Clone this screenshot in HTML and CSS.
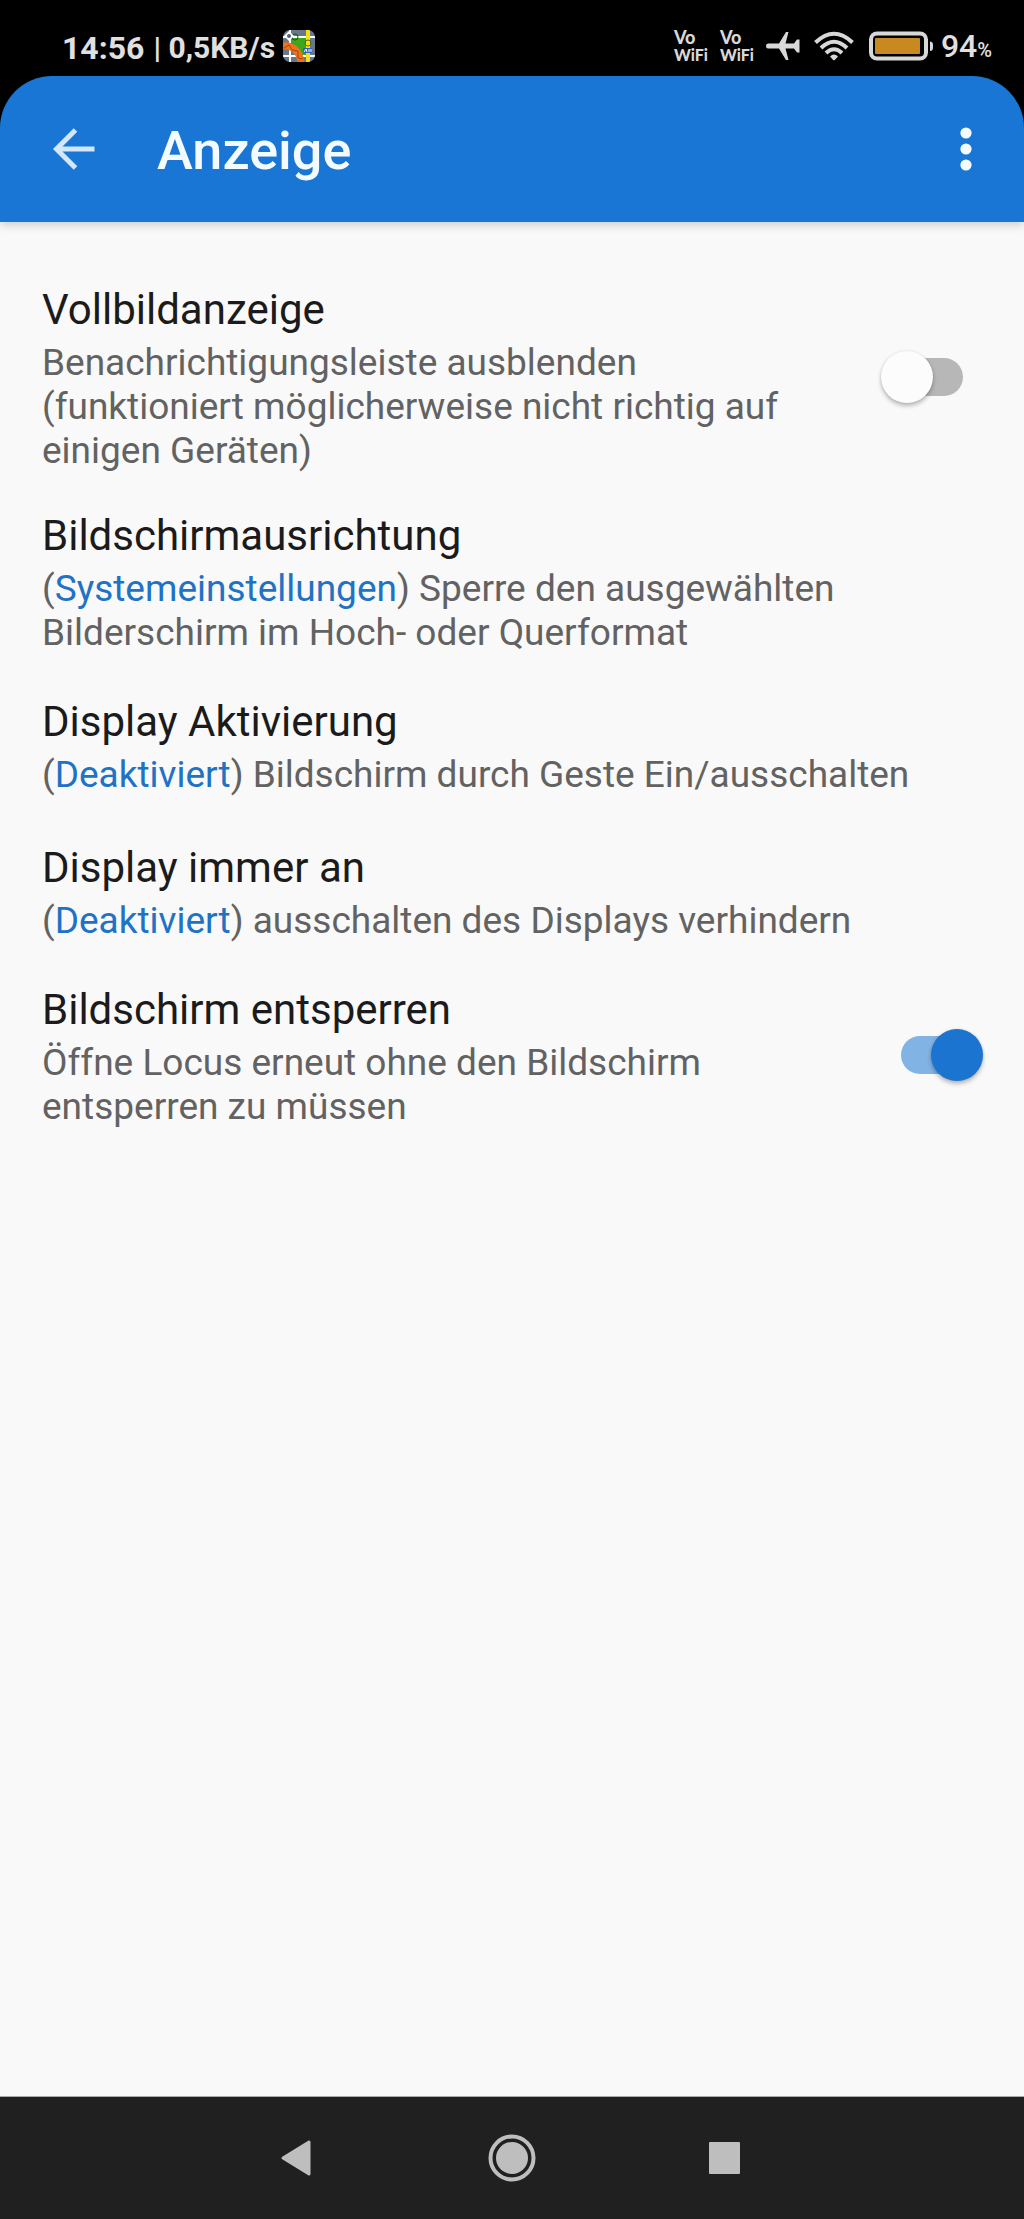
FILE: index.html
```html
<!DOCTYPE html>
<html lang="de">
<head>
<meta charset="utf-8">
<meta name="viewport" content="width=device-width, initial-scale=1">
<title>Anzeige</title>
<link rel="stylesheet" href="styles.css">
</head>
<body>
<div class="screen">
  <div class="status-bar">
    <div class="status-left">
      <span class="clock">14:56</span>
      <span class="speed">| 0,5KB/s</span>
      <svg class="map-icon" viewBox="0 0 32 32" aria-hidden="true">
        <defs><clipPath id="tile"><rect width="32" height="32" rx="7"/></clipPath></defs>
        <g clip-path="url(#tile)">
          <rect width="32" height="32" fill="#66788a"/>
          <path d="M7 7H24V25H18L7 12Z" fill="#3fa51c"/>
          <path d="M0 7H32M7 0V32M0 26H32" stroke="#fff" stroke-width="2" fill="none"/>
          <path d="M25 0V32" stroke="#f6e013" stroke-width="4"/>
          <path d="M0 16C8 15 17 20 18 33" stroke="#f0701c" stroke-width="7" fill="none"/>
          <path d="M1 18L6 15L9 20L15 21L15 28L20 29" stroke="#a3480e" fill="none"/>
          <circle cx="12" cy="7" r="3" fill="none" stroke="#234c1c"/>
          <circle cx="25" cy="13" r="3" fill="none" stroke="#59651c"/>
          <path d="M6 1L11 6L6 11L1 6Z" fill="#fff"/>
          <circle cx="6" cy="6" r="2" fill="#4f6070"/>
          <rect x="20" y="18" width="9" height="5" fill="#2b62c4"/>
          <path d="M21 22L23 19L24 22M26 19V22M28 19V22" stroke="#fff" fill="none"/>
        </g>
      </svg>
    </div>
    <div class="status-right">
      <span class="vowifi"><span class="vowifi-top">Vo</span><span>WiFi</span></span>
      <span class="vowifi"><span class="vowifi-top">Vo</span><span>WiFi</span></span>
      <svg class="plane-icon" viewBox="0 0 34 30" aria-hidden="true">
        <path d="M2 12.500H13L20 1H22.500L19.500 12.500H28L31 8.500H33.500V21.500H31L28 17.500H19.500L22.500 29H20L13 17.500H2Q0 17.500 0 15T2 12.500Z" fill="#d8d8d8"/>
      </svg>
      <svg class="wifi-icon" viewBox="0 0 40 30" aria-hidden="true">
        <g fill="none" stroke="#d8d8d8" stroke-width="4">
          <path d="M1.500 11.500Q20 -6 38.500 11.500"/>
          <path d="M7 17Q20 4.500 33 17"/>
          <path d="M12 22Q20 14.500 28 22"/>
        </g>
        <path d="M16 25.500Q20 21.500 24 25.500L20.800 29Q20 29.600 19.200 29Z" fill="#d8d8d8"/>
      </svg>
      <svg class="battery-icon" viewBox="0 0 66 30" aria-hidden="true">
        <rect x="2" y="2.500" width="55" height="25" rx="6" fill="none" stroke="#d8d8d8" stroke-width="4"/>
        <rect x="6" y="7" width="45" height="16" rx="1" fill="#c88a20"/>
        <path d="M61 10.500Q64 10.500 64 14V16.500Q64 20 61 20Z" fill="#d8d8d8"/>
      </svg>
      <span class="charge">94<small class="percent">%</small></span>
    </div>
  </div>

  <header class="app-bar">
    <button class="icon-button" type="button" aria-label="Zurück">
      <svg class="back-icon" viewBox="0 0 42 42" aria-hidden="true">
        <path d="M41.500 21H4M22.500 2L3.500 21L22.500 40" fill="none" stroke="#d3e7fb" stroke-width="5"/>
      </svg>
    </button>
    <h1 class="app-title">Anzeige</h1>
    <button class="icon-button" type="button" aria-label="Mehr">
      <svg class="more-icon" viewBox="0 0 12 44" aria-hidden="true">
        <g fill="#f4fbff"><circle cx="6" cy="6" r="5.600"/><circle cx="6" cy="22" r="5.600"/><circle cx="6" cy="38" r="5.600"/></g>
      </svg>
    </button>
  </header>

  <main class="settings">
    <label class="setting" for="fullscreen">
      <span class="setting-text">
        <span class="setting-title">Vollbildanzeige</span>
        <span class="setting-info">Benachrichtigungsleiste ausblenden (funktioniert möglicherweise nicht richtig auf einigen Geräten)</span>
      </span>
      <input class="switch" id="fullscreen" type="checkbox" role="switch">
    </label>
    <button class="setting" type="button">
      <span class="setting-text">
        <span class="setting-title">Bildschirmausrichtung</span>
        <span class="setting-info">(<span class="value">Systemeinstellungen</span>) Sperre den ausgewählten Bilderschirm im Hoch- oder Querformat</span>
      </span>
    </button>
    <button class="setting" type="button">
      <span class="setting-text">
        <span class="setting-title">Display Aktivierung</span>
        <span class="setting-info">(<span class="value">Deaktiviert</span>) Bildschirm durch Geste Ein/ausschalten</span>
      </span>
    </button>
    <button class="setting" type="button">
      <span class="setting-text">
        <span class="setting-title">Display immer an</span>
        <span class="setting-info">(<span class="value">Deaktiviert</span>) ausschalten des Displays verhindern</span>
      </span>
    </button>
    <label class="setting" for="unlock">
      <span class="setting-text">
        <span class="setting-title">Bildschirm entsperren</span>
        <span class="setting-info">Öffne Locus erneut ohne den Bildschirm entsperren zu müssen</span>
      </span>
      <input class="switch" id="unlock" type="checkbox" role="switch" checked>
    </label>
  </main>

  <nav class="nav-bar">
    <button class="nav-button" type="button" aria-label="Zurück">
      <svg class="nav-icon" viewBox="0 0 48 48" aria-hidden="true"><path d="M8 24L34 8V40Z" fill="#bebebe" stroke="#bebebe" stroke-width="3" stroke-linejoin="round"/></svg>
    </button>
    <button class="nav-button" type="button" aria-label="Startseite">
      <svg class="nav-icon" viewBox="0 0 48 48" aria-hidden="true"><circle cx="24" cy="24" r="21.500" fill="none" stroke="#bebebe" stroke-width="4"/><circle cx="24" cy="24" r="16" fill="#bebebe"/></svg>
    </button>
    <button class="nav-button" type="button" aria-label="Letzte Apps">
      <svg class="nav-icon" viewBox="0 0 48 48" aria-hidden="true"><rect x="8" y="8" width="31" height="32" rx="1" fill="#bebebe"/></svg>
    </button>
  </nav>
</div>
</body>
</html>
```
FILE: styles.css
```css
* {
  box-sizing: border-box;
}

body {
  margin: 0;
  background: #f9f9f9;
  font-family: Roboto, "Liberation Sans", sans-serif;
}

button {
  margin: 0;
  padding: 0;
  border: 0;
  background: none;
  font: inherit;
  cursor: pointer;
}

svg {
  display: block;
  flex: none;
}

.screen {
  display: flex;
  flex-direction: column;
  min-height: 100vh;
}

/* Status bar */
.status-bar {
  display: flex;
  justify-content: space-between;
  height: 76px;
  padding: 28px 32px 0 62px;
  background: #000;
  color: #e0e0e0;
}

.status-left,
.status-right {
  display: flex;
  align-items: center;
  height: 36px;
}

.clock,
.speed,
.charge {
  padding-top: 3px;
  line-height: 36px;
}

.clock {
  margin-right: 9px;
  font-size: 32px;
  font-weight: 700;
}

.speed {
  margin-right: 8px;
  font-size: 30px;
  font-weight: 700;
}

.map-icon {
  width: 32px;
  height: 32px;
}

.vowifi {
  display: flex;
  flex-direction: column;
  width: 35px;
  margin-right: 11px;
  color: #d8d8d8;
  font-family: Lato, sans-serif;
  font-size: 16px;
  font-weight: 900;
  line-height: 17px;
}

.vowifi-top {
  font-size: 18px;
}

.plane-icon {
  width: 34px;
  height: 30px;
  margin-right: 14px;
}

.wifi-icon {
  width: 40px;
  height: 30px;
  margin-right: 15px;
}

.battery-icon {
  width: 66px;
  height: 30px;
  margin-right: 6px;
}

.charge {
  font-size: 32px;
  font-weight: 500;
}

.percent {
  font-size: 20px;
}

/* App bar */
.app-bar {
  display: flex;
  flex: none;
  align-items: center;
  height: 146px;
  padding: 0 10px 0 26px;
  border-radius: 52px 52px 0 0;
  background: #1976d4;
  box-shadow: 0 3px 10px rgba(0, 0, 0, 0.18), 0 -52px 0 52px #000;
  clip-path: inset(0 0 -20px 0);
}

.icon-button {
  display: flex;
  align-items: center;
  justify-content: center;
  width: 96px;
  height: 96px;
}

.back-icon {
  width: 42px;
  height: 42px;
}

.more-icon {
  width: 12px;
  height: 44px;
}

.app-title {
  flex: 1;
  margin: 0 0 0 35px;
  padding-top: 4px;
  color: #f4fbff;
  font-size: 54px;
  font-weight: 500;
  line-height: 60px;
}

/* Settings list */
.settings {
  display: flex;
  flex: 1;
  flex-direction: column;
  padding-top: 44px;
}

.setting {
  display: flex;
  align-items: center;
  gap: 48px;
  min-height: 146px;
  padding: 20px 40px 19px 42px;
  text-align: left;
  cursor: pointer;
}

.setting-text {
  display: flex;
  flex: 1;
  flex-direction: column;
  gap: 7px;
}

.setting-title {
  color: #1b1b1b;
  font-size: 42px;
  line-height: 48px;
}

.setting-info {
  color: #626262;
  font-size: 37px;
  line-height: 44px;
}

.value {
  color: #1f72c4;
}

/* Switch: the thumb reaches past both ends of the track */
.switch {
  position: relative;
  flex: none;
  width: 62px;
  height: 38px;
  margin: 0 21px 6px;
  border-radius: 19px;
  background: #b7b7b7;
  appearance: none;
  cursor: pointer;
}

.switch::before {
  content: "";
  position: absolute;
  top: -7px;
  left: -20px;
  width: 52px;
  height: 52px;
  border-radius: 50%;
  background: #fcfcfc;
  box-shadow: 0 3px 4px rgba(0, 0, 0, 0.25), 0 0 3px rgba(0, 0, 0, 0.1);
}

.switch:checked {
  background: #82b3e5;
}

.switch:checked::before {
  left: 30px;
  background: #1b74cf;
}

/* System navigation */
.nav-bar {
  display: flex;
  gap: 8px;
  justify-content: center;
  height: 123px;
  border-top: 1px solid #a8a8a8;
  background: #202020;
}

.nav-button {
  display: flex;
  align-items: center;
  justify-content: center;
  width: 20%;
}

.nav-icon {
  width: 48px;
  height: 48px;
}
```
